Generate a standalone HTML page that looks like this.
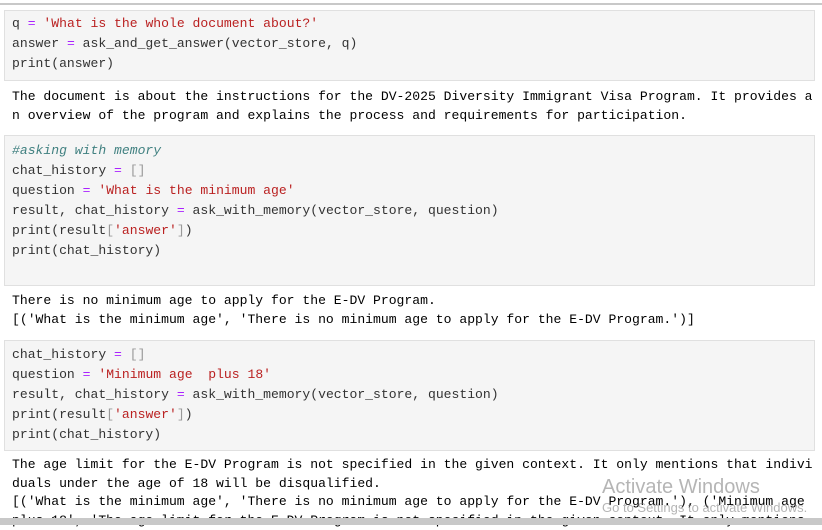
<!DOCTYPE html>
<html><head><style>
body{margin:0;width:822px;height:525px;background:#fff;overflow:hidden;position:relative;font-family:"Liberation Mono",monospace;font-size:13.08px;color:#000}
.top{position:absolute;left:0;top:3px;width:822px;height:2px;background:#c8c8c8}
.cell{position:absolute;left:4px;width:811px;background:#f5f5f5;border:1px solid #e0e0e0;box-sizing:border-box}
.code{position:absolute;left:12px;line-height:20px;white-space:pre;color:#333}
.out{position:absolute;left:12px;line-height:18.5px;white-space:pre;color:#000}
.s{color:#ba2121}.o{color:#aa22ff}.c{color:#408080;font-style:italic}.b{color:#999}
.wm1{position:absolute;left:602px;top:476px;font-family:"Liberation Sans",sans-serif;font-size:20px;color:rgba(120,120,120,.55)}
.wm2{position:absolute;left:602px;top:500px;font-family:"Liberation Sans",sans-serif;font-size:13px;color:rgba(120,120,120,.55);white-space:nowrap}
.bot{position:absolute;left:0;top:518px;width:822px;height:7px;background:#c8c8c8}
</style></head><body>
<div class="top"></div>
<div class="cell" style="top:10px;height:71px"></div>
<div class="code" style="top:14px">q <span class="o">=</span> <span class="s">'What is the whole document about?'</span>
answer <span class="o">=</span> ask_and_get_answer(vector_store, q)
print(answer)</div>
<div class="out" style="top:88px">The document is about the instructions for the DV-2025 Diversity Immigrant Visa Program. It provides a
n overview of the program and explains the process and requirements for participation.</div>
<div class="cell" style="top:135px;height:151px"></div>
<div class="code" style="top:141px"><span class="c">#asking with memory</span>
chat_history <span class="o">=</span> <span class="b">[]</span>
question <span class="o">=</span> <span class="s">'What is the minimum age'</span>
result, chat_history <span class="o">=</span> ask_with_memory(vector_store, question)
print(result<span class="b">[</span><span class="s">'answer'</span><span class="b">]</span>)
print(chat_history)</div>
<div class="out" style="top:292px">There is no minimum age to apply for the E-DV Program.
[('What is the minimum age', 'There is no minimum age to apply for the E-DV Program.')]</div>
<div class="cell" style="top:340px;height:111px"></div>
<div class="code" style="top:345px">chat_history <span class="o">=</span> <span class="b">[]</span>
question <span class="o">=</span> <span class="s">'Minimum age  plus 18'</span>
result, chat_history <span class="o">=</span> ask_with_memory(vector_store, question)
print(result<span class="b">[</span><span class="s">'answer'</span><span class="b">]</span>)
print(chat_history)</div>
<div class="out" style="top:456px">The age limit for the E-DV Program is not specified in the given context. It only mentions that indivi
duals under the age of 18 will be disqualified.
[('What is the minimum age', 'There is no minimum age to apply for the E-DV Program.'), ('Minimum age 
plus 18', 'The age limit for the E-DV Program is not specified in the given context. It only mentions</div>
<div class="wm1">Activate Windows</div>
<div class="wm2">Go to Settings to activate Windows.</div>
<div class="bot"></div>
</body></html>
